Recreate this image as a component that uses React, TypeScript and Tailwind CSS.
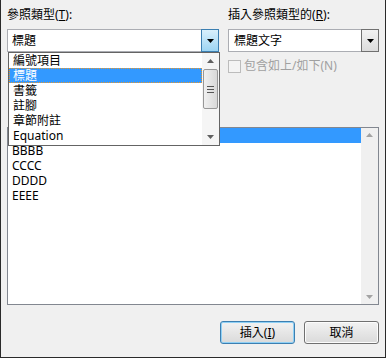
import React from 'react';

const font = "font-['Noto_Sans','Noto_Sans_CJK_TC',sans-serif]";

const Arrow = ({ dir = 'down', color = '#000' }: { dir?: 'up' | 'down'; color?: string }) => (
  <svg width="7" height="4" viewBox="0 0 7 4">
    {dir === 'down' ? <polygon points="0,0 7,0 3.5,4" fill={color} /> : <polygon points="0,4 7,4 3.5,0" fill={color} />}
  </svg>
);

const typeItems = ['編號項目', '標題', '書籤', '註腳', '章節附註', 'Equation'];
// first row sits under the open dropdown, only its highlight shows
const listItems = ['', 'BBBB', 'CCCC', 'DDDD', 'EEEE'];

const App: React.FC = () => {
  return (
    <div className={`${font} relative w-[386px] h-[358px] bg-[#f0f0f0] border-l border-r border-b border-[#2a2a2a] px-[6px] pt-[7px] text-[12px] text-black flex flex-col`}>
      <div className="flex gap-[9px]">
        {/* left column */}
        <div className="w-[212px] flex flex-col">
          <div className="h-[15px] leading-[15px]">
            參照類型(<u>T</u>):
          </div>
          <div className="mt-[7px] h-[23px] flex bg-white">
            <div className="flex-1 border-t border-l border-b border-[#abadb3] pl-[4px] leading-[21px]">標題</div>
            <div className="w-[18px] h-[23px] border border-[#3c7fb1] bg-gradient-to-b from-[#d9f0fc] to-[#9dd5f3] flex items-center justify-center">
              <Arrow />
            </div>
          </div>
        </div>
        {/* right column */}
        <div className="w-[151px] flex flex-col">
          <div className="h-[15px] leading-[15px]">
            插入參照類型的(<u>R</u>):
          </div>
          <div className="mt-[7px] h-[23px] flex bg-white">
            <div className="flex-1 border-t border-l border-b border-[#abadb3] pl-[5px] leading-[21px]">標題文字</div>
            <div className="w-[18px] h-[23px] border border-[#707070] bg-gradient-to-b from-[#f2f2f2] to-[#dcdcdc] flex items-center justify-center">
              <Arrow />
            </div>
          </div>
          <div className="mt-[7px] flex items-center h-[14px]">
            <div className="w-[13px] h-[13px] border border-[#bcbcbc] bg-[#f4f4f4]" />
            <span className="ml-[3px] text-[#a0a0a0] leading-[14px]">包含如上/如下(N)</span>
          </div>
        </div>
      </div>

      {/* main list */}
      <div className="mt-[54px] h-[178px] border border-[#828790] bg-white flex">
        <div className="flex-1 flex flex-col">
          {listItems.map((it, i) => (
            <div
              key={i}
              className={`h-[15px] leading-[15px] pl-[4px] ${i === 0 ? 'bg-[#3399ff] text-white' : ''}`}
            >
              {it}
            </div>
          ))}
        </div>
        <div className="w-[17px] bg-[#f0f0f0] flex flex-col items-center justify-between py-[5px]">
          <Arrow dir="up" color="#a3a3a3" />
          <Arrow dir="down" color="#a3a3a3" />
        </div>
      </div>

      {/* buttons */}
      <div className="mt-[16px] flex justify-end gap-[9px]">
        <button className="w-[75px] h-[23px] rounded-[3px] border border-[#3c7fb1] bg-gradient-to-b from-[#f2f2f2] to-[#dadada] shadow-[inset_0_0_0_1px_#8fd0f5] leading-[21px]">
          插入(<u>I</u>)
        </button>
        <button className="w-[75px] h-[23px] rounded-[3px] border border-[#707070] bg-gradient-to-b from-[#f2f2f2] to-[#dadada] shadow-[inset_0_0_0_1px_#fcfcfc] leading-[21px]">
          取消
        </button>
      </div>

      {/* dropdown list */}
      <div className="absolute left-[7px] top-[52px] w-[212px] h-[94px] border border-[#646464] bg-white flex">
        <div className="flex-1 flex flex-col">
          {typeItems.map((it) => (
            <div
              key={it}
              className={`h-[15px] leading-[15px] pl-[4px] ${it === '標題' ? 'bg-[#3399ff] text-white outline-1 outline-dotted outline-[#e8962a] -outline-offset-1' : ''}`}
            >
              {it}
            </div>
          ))}
        </div>
        <div className="w-[17px] bg-[#f5f5f5] flex flex-col items-center py-[6px]">
          <Arrow dir="up" color="#606060" />
          <div className="mt-[6px] w-[15px] h-[40px] rounded-[2px] border border-[#979797] bg-gradient-to-r from-[#f0f0f0] to-[#d8d8d8] flex flex-col items-center justify-center gap-[2px]">
            <div className="w-[7px] h-px bg-[#555]" />
            <div className="w-[7px] h-px bg-[#555]" />
            <div className="w-[7px] h-px bg-[#555]" />
          </div>
          <div className="flex-1" />
          <Arrow dir="down" color="#606060" />
        </div>
      </div>
    </div>
  );
};

export default App;
